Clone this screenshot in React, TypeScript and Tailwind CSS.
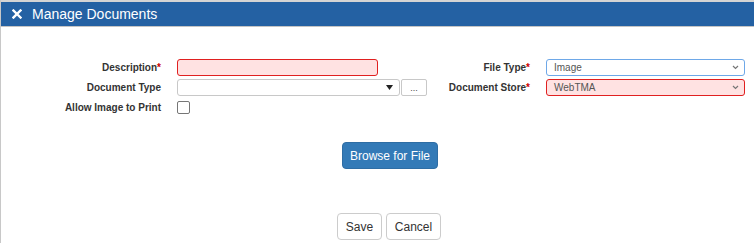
export default function App() {
  const label = "font-bold text-[10px] text-[#333] text-right whitespace-nowrap";
  const star = <span className="text-[#c00]">*</span>;

  return (
    <div
      className="h-[243px] w-[754px] overflow-hidden bg-white border-l border-[#c8c8c8]"
      style={{ fontFamily: '"Liberation Sans", Arial, sans-serif' }}
    >
      {/* header */}
      <div className="flex h-[27px] items-center border-t-2 border-b border-t-[#d4d4d4] border-b-[#c4c4c4] bg-[#2461a3] text-white">
        <svg width="10" height="10" viewBox="0 0 10 10" className="ml-[11px]">
          <path d="M1.5 1.5 L8.5 8.5 M8.5 1.5 L1.5 8.5" stroke="white" strokeWidth="2.4" strokeLinecap="square" />
        </svg>
        <span className="ml-[10px] text-[14px]">Manage Documents</span>
      </div>

      {/* form */}
      <div className="pt-[32px]">
        <div className="flex h-[17px] items-center">
          <div className="flex w-[440px] items-center">
            <div className={`${label} w-[160px]`}>Description{star}</div>
            <div className="ml-[16px] h-[17px] w-[201px] rounded-[3px] border border-[#e02020] bg-[#ffe2e2]" />
          </div>
          <div className={`${label} w-[89px]`}>File Type{star}</div>
          <div className="ml-[16px] flex h-[17px] w-[199px] items-center justify-between rounded-[3px] border border-[#6ea8e8] bg-white pl-[7px] pr-[5px] text-[10px] text-[#555]">
            <span>Image</span>
            <Chevron />
          </div>
        </div>

        <div className="mt-[3px] flex h-[17px] items-center">
          <div className="flex w-[440px] items-center">
            <div className={`${label} w-[160px]`}>Document Type</div>
            <div className="ml-[16px] flex h-[17px] w-[223px] items-center justify-end rounded-[3px] border border-[#c8c8c8] bg-white pr-[6px]">
              <svg width="7" height="5" viewBox="0 0 7 5">
                <path d="M0 0 H7 L3.5 5 Z" fill="#222" />
              </svg>
            </div>
            <div className="ml-[1px] flex h-[17px] w-[26px] items-end justify-center rounded-[2px] border border-[#c8c8c8] bg-white pb-[2px] text-[9px] leading-[9px] text-[#444]">
              ...
            </div>
          </div>
          <div className={`${label} w-[89px]`}>Document Store{star}</div>
          <div className="ml-[16px] flex h-[17px] w-[199px] items-center justify-between rounded-[3px] border border-[#e02020] bg-[#ffe2e2] pl-[7px] pr-[5px] text-[10px] text-[#555]">
            <span>WebTMA</span>
            <Chevron />
          </div>
        </div>

        <div className="mt-[5px] flex h-[13px] items-center">
          <div className={`${label} w-[160px]`}>Allow Image to Print</div>
          <div className="ml-[16px] h-[13px] w-[13px] rounded-[2px] border border-[#767676] bg-white" />
        </div>
      </div>

      {/* browse */}
      <div className="mt-[28px] flex">
        <button className="ml-[341px] h-[27px] w-[96px] rounded-[4px] border border-[#2e6da4] bg-[#337ab7] text-[12px] text-white">
          Browse for File
        </button>
      </div>

      {/* actions */}
      <div className="mt-[44px] flex gap-[4px]">
        <button className="ml-[336px] h-[27px] w-[45px] rounded-[4px] border border-[#ccc] bg-white text-[12px] text-[#333]">
          Save
        </button>
        <button className="h-[27px] w-[55px] rounded-[4px] border border-[#ccc] bg-white text-[12px] text-[#333]">
          Cancel
        </button>
      </div>
    </div>
  );
}

function Chevron() {
  return (
    <svg width="7" height="5" viewBox="0 0 7 5">
      <path d="M1 1 L3.5 3.5 L6 1" stroke="#777" strokeWidth="1.2" fill="none" />
    </svg>
  );
}
